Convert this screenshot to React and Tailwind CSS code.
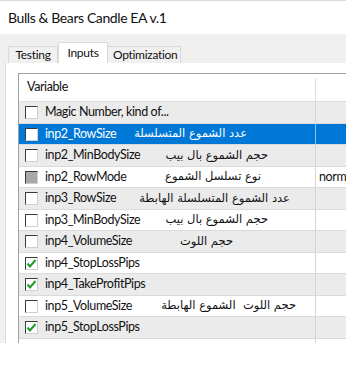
const rows = [
  { name: 'Magic Number, kind of...', ar: '', mr: '', state: 'off' },
  { name: 'inp2_RowSize', ar: 'عدد الشموع المتسلسلة', mr: 'mr-[68px]', state: 'off', sel: true },
  { name: 'inp2_MinBodySize', ar: 'حجم الشموع بال بيب', mr: 'mr-[47px]', state: 'off' },
  { name: 'inp2_RowMode', ar: 'نوع تسلسل الشموع', mr: 'mr-[54px]', state: 'mixed', value: 'normal' },
  { name: 'inp3_RowSize', ar: 'عدد الشموع المتسلسلة الهابطة', mr: 'mr-[25px]', state: 'off' },
  { name: 'inp3_MinBodySize', ar: 'حجم الشموع بال بيب', mr: 'mr-[47px]', state: 'off' },
  { name: 'inp4_VolumeSize', ar: 'حجم اللوت', mr: 'mr-[82px]', state: 'off' },
  { name: 'inp4_StopLossPips', ar: '', mr: '', state: 'on' },
  { name: 'inp4_TakeProfitPips', ar: '', mr: '', state: 'on' },
  { name: 'inp5_VolumeSize', ar: 'حجم اللوت  الشموع الهابطة', mr: 'mr-[19px]', state: 'off' },
  { name: 'inp5_StopLossPips', ar: '', mr: '', state: 'on' },
  { name: 'inp5_TakeProfitPips', ar: '', mr: '', state: 'off' },
]

function Check({ state }) {
  return (
    <span
      className={
        'w-[13px] h-[13px] shrink-0 border-t border-l border-t-[#3c3c3c] border-l-[#3c3c3c] border-r border-b border-r-[#cfcfcf] border-b-[#cfcfcf] flex items-center justify-center ' +
        (state === 'mixed' ? 'bg-[#a8a8a8]' : 'bg-white')
      }
    >
      {state === 'on' && (
        <svg width="11" height="11" viewBox="0 0 11 11">
          <path d="M1.5 5.5 L4 8.5 L9.5 2" fill="none" stroke="#1f9a2a" strokeWidth="2" />
        </svg>
      )}
    </span>
  )
}

export default function App() {
  return (
    <div className="w-[346px] h-[386px] bg-white overflow-hidden text-[#111] font-['Lato',sans-serif]">
      {/* Title */}
      <div className="h-[34px] border-t border-[#dadada] flex items-center pl-[8px] text-[14px] tracking-[-0.4px]">
        Bulls &amp; Bears Candle EA v.1
      </div>

      {/* Tab strip */}
      <div className="h-[29px] bg-[#f0f0f0] flex items-end pl-[8px] text-[12px] tracking-[-0.3px]">
        <div className="h-[17px] w-[50px] border border-b-0 border-[#d9d9d9] bg-[#f0f0f0] flex items-center justify-center">
          Testing
        </div>
        <div className="h-[21px] w-[50px] border border-b-0 border-[#d9d9d9] bg-white flex items-start pt-[1px] justify-center">
          Inputs
        </div>
        <div className="h-[17px] w-[73px] border border-b-0 border-l-0 border-[#d9d9d9] bg-[#f0f0f0] flex items-center pl-[5px]">
          Optimization
        </div>
      </div>

      {/* Tab page */}
      <div className="h-[280px] flex">
        <div className="w-[6px] bg-[#f0f0f0] border-r border-[#dadada] shrink-0" />
        <div className="flex-1 bg-white pl-[12px] pt-[10px] overflow-hidden">
          <div className="h-full border-t border-l border-[#a0a0a0] text-[12.5px] tracking-[-0.4px] overflow-hidden">
            {/* Header */}
            <div className="h-[28px] flex border-b border-[#dcdcdc]">
              <div className="w-[296px] shrink-0 pl-[8px] flex items-center">Variable</div>
              <div className="w-[1px] mt-[4px] bg-[#e0e0e0]" />
              <div className="flex-1" />
            </div>

            {rows.map((r, i) => (
              <div
                key={r.name}
                className={
                  'flex border-b border-[#dadada] ' +
                  (i % 2 === 0 ? 'h-[22px] ' : 'h-[21px] ') +
                  (r.sel ? 'bg-[#0078d7] text-white' : i % 2 === 0 ? 'bg-[#ebebeb]' : 'bg-white')
                }
              >
                <div className="w-[296px] shrink-0 flex items-center pl-[6px]">
                  <Check state={r.state} />
                  <span className="ml-[7px] whitespace-nowrap">{r.name}</span>
                  {r.ar && (
                    <span
                      dir="rtl"
                      className={'ml-auto whitespace-pre tracking-normal text-[11.5px] font-["DejaVu_Sans",sans-serif] ' + r.mr}
                    >
                      {r.ar}
                    </span>
                  )}
                </div>
                <div className={'w-[1px] shrink-0 ' + (r.sel ? 'bg-[#8cc0ee]' : 'bg-[#d4d4d4]')} />
                <div className="flex-1 flex items-center pl-[3px] whitespace-nowrap">{r.value}</div>
              </div>
            ))}
          </div>
        </div>
      </div>
    </div>
  )
}
